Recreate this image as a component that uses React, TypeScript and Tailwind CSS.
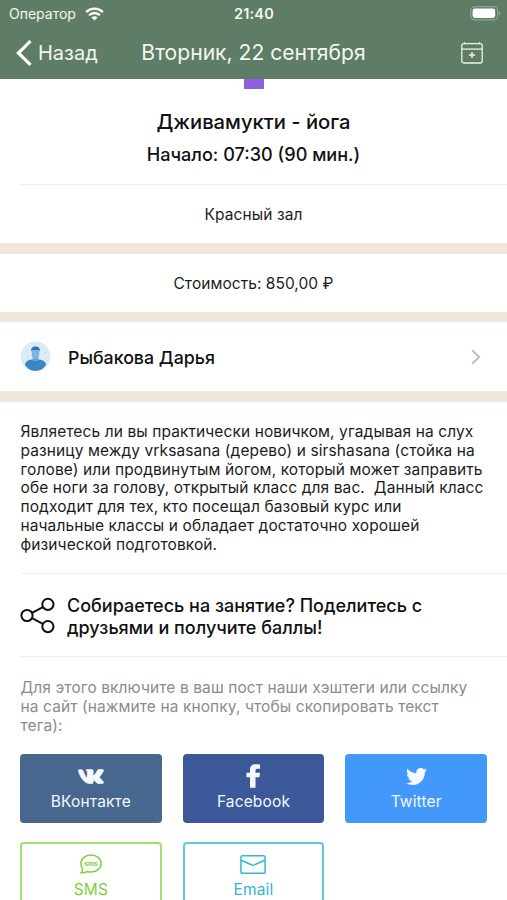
import React from "react";
import { FaTwitter } from "react-icons/fa";

const description = [
  "Являетесь ли вы практически новичком, угадывая на слух",
  "разницу между vrksasana (дерево) и sirshasana (стойка на",
  "голове) или продвинутым йогом, который может заправить",
  "обе ноги за голову, открытый класс для вас.  Данный класс",
  "подходит для тех, кто посещал базовый курс или",
  "начальные классы и обладает достаточно хорошей",
  "физической подготовкой.",
];

const shareHint = [
  "Для этого включите в ваш пост наши хэштеги или ссылку",
  "на сайт (нажмите на кнопку, чтобы скопировать текст",
  "тега):",
];

function WifiIcon() {
  return (
    <svg width="19" height="14" viewBox="0 0 19 14" fill="none" stroke="white" strokeWidth="2.3">
      <path d="M1.2 5.1a11.8 11.8 0 0 1 16.6 0" />
      <path d="M4.1 8.2a7.7 7.7 0 0 1 10.8 0" />
      <path d="M9.5 13.6 6.5 10.6a4.3 4.3 0 0 1 6 0Z" fill="white" stroke="none" />
    </svg>
  );
}

function BatteryIcon() {
  return (
    <svg width="31" height="15" viewBox="0 0 31 15" fill="none">
      <rect x="0.7" y="0.7" width="27" height="13.2" rx="4" stroke="#8fa594" strokeWidth="1.2" />
      <rect x="2.6" y="2.6" width="22.6" height="9.4" rx="2.4" fill="white" />
      <path d="M29 5v4.6c1-.4 1.4-1.2 1.4-2.3S30 5.4 29 5Z" fill="#8fa594" />
    </svg>
  );
}

function CalendarPlusIcon() {
  return (
    <svg width="22" height="22" viewBox="0 0 22 22" fill="none" stroke="#eaf3e8" strokeWidth="1.3">
      <rect x="0.8" y="1.6" width="20.4" height="19.4" rx="2" />
      <path d="M0.8 7.2h20.4M3.5 0.3v2M18.5 0.3v2" />
      <path d="M11 10v6M8 13h6" strokeWidth="1.5" />
    </svg>
  );
}

function Avatar() {
  return (
    <svg width="31" height="31" viewBox="0 0 31 31">
      <circle cx="15.5" cy="15.5" r="15" fill="#dcebf8" />
      <path d="M5 24c0-3.600 3.200-5 7-5.600h7c3.800.6 7 2 7 5.600-2.400 3.800-6.200 6-10.500 6S7.400 27.800 5 24Z" fill="#3a86c6" />
      <path d="M12.700 14.500h5.600v4.700c-.6 1.500-5 1.500-5.600 0Z" fill="#68a5d8" />
      <path d="M11.800 9h7.400v5c0 5-7.400 5-7.400 0Z" fill="#7fb4e0" />
      <path d="M11.400 10.500c-.8-3.200 1-5 4.100-5s4.900 1.800 4.100 5l-1-1.500h-6.200Z" fill="#2f74b5" />
      <path d="M6 9.500h1M24 12h1.500M26 10.500v1M7 16h1" stroke="#a9cdec" strokeWidth="1" />
    </svg>
  );
}

function ShareNodesIcon() {
  return (
    <svg width="35" height="37" viewBox="0 0 35 37" fill="none" stroke="#111" strokeWidth="2">
      <circle cx="7" cy="18.5" r="5.6" />
      <circle cx="27.9" cy="7.3" r="5.6" />
      <circle cx="27.9" cy="29.6" r="5.6" />
      <path d="m12 15.800 10.900-5.700M12 21.200l10.900 5.700" />
    </svg>
  );
}

function VkIcon() {
  return (
    <svg width="26" height="15" viewBox="0 0 26 15" fill="currentColor" stroke="currentColor" strokeWidth="0.7" strokeLinejoin="round">
      <path d="M12.400 14.600h1.700c.7-.1.900-.5.900-1.100 0-1.700.8-2.500 2-1.400l1.900 1.800c.5.500 1 .7 1.700.7h3.700c1.300 0 1.600-.9.800-2-.7-1.100-2.200-2.500-3.300-3.600-.5-.6-.5-.9 0-1.500 1-1.300 2.800-3.700 3.500-5.300.4-1.100.1-1.700-1-1.700h-3.400c-.9 0-1.200.3-1.600 1-.6 1.300-1.500 3-2.500 4.200-1 1.200-1.700.9-1.700-.7V2c0-1.100-.4-1.600-1.700-1.600H9.100c-.8 0-1.100.6-.6 1.100.7.700.9 1.400.9 2.600v3.300c0 1.200-.8 1.300-1.500.4C6.800 6.100 5.800 4.200 5.100 2.100 4.700.900 4.400.700 3.300.700H1.300C.5.700.3 1.100.5 1.900c.8 3.200 2.400 6.700 4.800 9.300 2 2.300 4.400 3.400 7.100 3.400Z" />
    </svg>
  );
}

function FacebookIcon() {
  return (
    <svg width="15" height="24" viewBox="0 0 15 24" fill="currentColor">
      <path d="M4 23.700V13.300H.4V8.800H4V5.800C4 2.200 6.100.3 9.700.3c1.700 0 3.700.2 4.400.3v4.100h-2.600c-1.600 0-2 .8-2 2v2.100h4.600l-.7 4.500H9.500v10.400Z" />
    </svg>
  );
}

function SmsIcon() {
  return (
    <svg width="22" height="20" viewBox="0 0 22 20" fill="none" stroke="#7ed03a" strokeWidth="1.5">
      <path d="M1.200 18.800c1.100-1.200 1.500-2.500 1.400-3.900C1.500 13.300.900 11.500.900 9.600.900 4.700 5.400.900 11 .900s10.100 3.800 10.100 8.600-4.500 8.600-10.100 8.600c-1.300 0-2.500-.2-3.600-.6-1.900 1-4 1.500-6.200 1.300Z" />
      <text x="11" y="11.600" textAnchor="middle" fontSize="6" fontWeight="700" textLength="13.500" lengthAdjust="spacingAndGlyphs" fontFamily="Inter, sans-serif" fill="#7ed03a" stroke="none">sms</text>
    </svg>
  );
}

function MailIcon() {
  return (
    <svg width="26" height="19" viewBox="0 0 26 19" fill="none" stroke="#35b5d8" strokeWidth="1.5">
      <rect x="0.9" y="0.8" width="24.2" height="17.4" rx="1.8" />
      <path d="m1.200 5.300 10.200 4.500c1 .5 2.200.5 3.200 0l10.200-4.500" />
    </svg>
  );
}

type ShareButtonProps = {
  label: string;
  icon: React.ReactNode;
  className: string;
};

function ShareButton({ label, icon, className }: ShareButtonProps) {
  return (
    <button className={`flex h-[69px] flex-col items-center rounded-[4px] ${className}`}>
      <span className="flex h-[26px] items-center justify-center">{icon}</span>
      <span className="text-[15.5px] leading-[26px] tracking-[0.15px]">{label}</span>
    </button>
  );
}

export default function App() {
  return (
    <div className="h-[900px] w-full overflow-hidden bg-white font-[Inter,'Liberation_Sans',sans-serif] text-[#1c1c1c]">
      <header className="h-[79px] bg-[#5f7d66] text-[#f0f7ee]">
        <div className="grid h-[27px] grid-cols-3 items-center pr-[6px] pl-[9px]">
          <div className="flex items-center gap-[9px]">
            <span className="text-[14px]">Оператор</span>
            <WifiIcon />
          </div>
          <span className="pr-[2px] text-center text-[14.5px] font-semibold tracking-[0.2px]">21:40</span>
          <div className="flex justify-end">
            <BatteryIcon />
          </div>
        </div>
        <div className="grid h-[51px] grid-cols-[100px_1fr_100px] items-center">
          <div className="flex items-center gap-[6px] pl-4">
            <svg width="16" height="26" viewBox="0 0 16 26" fill="none" stroke="white" strokeWidth="3.2">
              <path d="M14.5 1.2 2.4 13l12.1 11.8" />
            </svg>
            <span className="text-[20px]">Назад</span>
          </div>
          <h1 className="text-center text-[21.1px] whitespace-nowrap">Вторник, 22 сентября</h1>
          <div className="flex justify-end pr-6">
            <CalendarPlusIcon />
          </div>
        </div>
      </header>

      <section className="flex h-[105px] flex-col items-center">
        <div className="h-[10px] w-5 bg-[#8e60dc]" />
        <h2 className="mt-[19px] text-[20.2px] leading-7 font-medium text-[#111]">Дживамукти - йога</h2>
        <p className="mt-[5px] text-[18.1px] leading-[26px] font-medium text-[#111]">Начало: 07:30 (90 мин.)</p>
      </section>
      <div className="ml-5 h-px bg-[#f0f0f0]" />
      <section className="flex h-[58px] items-center justify-center pt-[2px] text-[15.5px] tracking-[0.08px]">Красный зал</section>
      <div className="h-[11px] bg-[#f1e6dc]" />
      <section className="flex h-[58px] items-center justify-center pt-px text-[15.5px] tracking-[0.05px]">Стоимость: 850,00 ₽</section>
      <div className="h-[10px] bg-[#f1e6dc]" />
      <section className="flex h-[69px] items-center pr-[26px] pl-5">
        <Avatar />
        <span className="ml-[17px] flex-1 pt-[3px] text-[17.8px] font-medium text-[#111]">Рыбакова Дарья</span>
        <svg width="10" height="16" viewBox="0 0 10 16" fill="none" stroke="#bcbcbe" strokeWidth="2">
          <path d="m1.2 1.2 7 6.8-7 6.8" />
        </svg>
      </section>
      <div className="h-[11px] bg-[#f1e6dc]" />

      <section className="h-[171px] pt-[20.6px] pl-[20.5px] text-[15.5px] leading-[18.95px] tracking-[0.1px]">
        {description.map((line) => (
          <p key={line} className="whitespace-pre">{line}</p>
        ))}
      </section>
      <div className="ml-5 h-px bg-[#f0f0f0]" />
      <section className="flex h-[82px] items-center pl-5">
        <ShareNodesIcon />
        <p className="ml-3 pt-[4px] text-[18px] leading-[22px] font-medium whitespace-nowrap text-[#111]">
          Собираетесь на занятие? Поделитесь с
          <br />
          друзьями и получите баллы!
        </p>
      </section>
      <div className="ml-5 h-px bg-[#f0f0f0]" />
      <section className="h-[77px] pt-[21px] pl-[20.5px] text-[15.5px] leading-[19px] tracking-[0.1px] text-[#8c8c8c]">
        {shareHint.map((line) => (
          <p key={line} className="whitespace-pre">{line}</p>
        ))}
      </section>

      <div className="mt-[20px] grid grid-cols-3 gap-x-[21px] gap-y-[19px] pr-[20px] pl-[20px]">
        <ShareButton label="ВКонтакте" icon={<VkIcon />} className="bg-[#47678f] pt-[9px] text-[#f5f9fd]" />
        <ShareButton label="Facebook" icon={<FacebookIcon />} className="bg-[#3c5898] pt-[9px] text-[#f5f9fd]" />
        <ShareButton label="Twitter" icon={<FaTwitter size={21} />} className="bg-[#4398fc] pt-[9px] text-[#f5f9fd]" />
        <ShareButton label="SMS" icon={<SmsIcon />} className="border-2 border-[#a3e074] pt-[7px] text-[#7ed03a]" />
        <ShareButton label="Email" icon={<MailIcon />} className="border-2 border-[#63c9e2] pt-[7px] text-[#35b5d8]" />
      </div>
    </div>
  );
}
